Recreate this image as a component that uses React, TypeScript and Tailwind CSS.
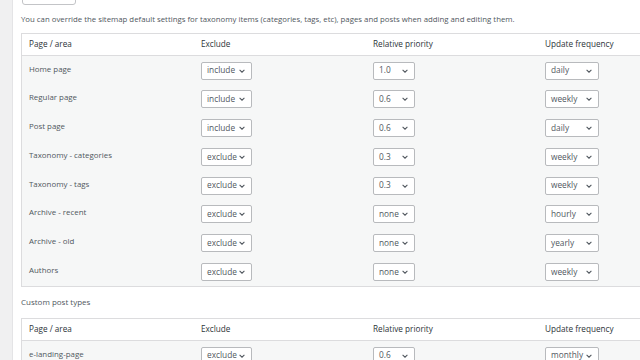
import React from 'react';

type Row = { label: string; exclude: string; priority: string; freq: string };

const mainRows: Row[] = [
  { label: 'Home page', exclude: 'include', priority: '1.0', freq: 'daily' },
  { label: 'Regular page', exclude: 'include', priority: '0.6', freq: 'weekly' },
  { label: 'Post page', exclude: 'include', priority: '0.6', freq: 'daily' },
  { label: 'Taxonomy - categories', exclude: 'exclude', priority: '0.3', freq: 'weekly' },
  { label: 'Taxonomy - tags', exclude: 'exclude', priority: '0.3', freq: 'weekly' },
  { label: 'Archive - recent', exclude: 'exclude', priority: 'none', freq: 'hourly' },
  { label: 'Archive - old', exclude: 'exclude', priority: 'none', freq: 'yearly' },
  { label: 'Authors', exclude: 'exclude', priority: 'none', freq: 'weekly' },
];

const customRows: Row[] = [
  { label: 'e-landing-page', exclude: 'exclude', priority: '0.6', freq: 'monthly' },
];

const Select: React.FC<{ value: string; width: string }> = ({ value, width }) => (
  <div
    className={`flex h-[18px] items-center justify-between rounded-[2px] border border-[#b8babd] bg-white pl-[5px] pr-[5px] text-[8.3px] text-[#50575e] ${width}`}
  >
    <span>{value}</span>
    <svg width="8" height="8" viewBox="0 0 10 10" fill="none" stroke="#50575e" strokeWidth="1.3">
      <path d="M2 3.5 L5 6.5 L8 3.5" />
    </svg>
  </div>
);

const SettingsTable: React.FC<{ rows: Row[] }> = ({ rows }) => (
  <div className="w-[660px] border border-[#dcdcde] bg-[#f6f7f7]">
    <div className="grid h-[22px] grid-cols-[179px_172px_172px_1fr] items-center border-b border-[#dcdcde] bg-white text-[8.2px] text-[#2c3338]">
      <div className="pl-[7px]">Page / area</div>
      <div>Exclude</div>
      <div>Relative priority</div>
      <div>Update frequency</div>
    </div>
    {rows.map((r) => (
      <div key={r.label} className="grid h-[28.75px] grid-cols-[179px_172px_172px_1fr] pt-[5.5px]">
        <div className="pl-[7px] text-[7.9px] leading-[14px] text-[#50575e]">{r.label}</div>
        <div>
          <Select value={r.exclude} width="w-[51px]" />
        </div>
        <div>
          <Select value={r.priority} width="w-[42px]" />
        </div>
        <div>
          <Select value={r.freq} width="w-[54px]" />
        </div>
      </div>
    ))}
  </div>
);

export default function App() {
  return (
    <div
      className="flex h-[360px] w-[640px] overflow-hidden bg-white"
      style={{ fontFamily: '"Open Sans", "Noto Sans", sans-serif' }}
    >
      <div className="w-[13px] shrink-0 border-r border-[#e4e4e6] bg-[#f0f0f1]" />
      <div className="min-w-0 flex-1 pl-[8px]">
        <div className="-mt-[16px] flex items-center">
          <div className="ml-[1px] h-[21px] w-[54px] rounded-[3px] border border-[#c3c4c7] bg-white" />
        </div>
        <p className="mt-[8px] text-[7.8px] leading-[12px] text-[#50575e]">
          You can override the sitemap default settings for taxonomy items (categories, tags, etc), pages and posts when adding and editing them.
        </p>
        <div className="mt-[8px]">
          <SettingsTable rows={mainRows} />
        </div>
        <p className="mt-[9px] text-[8px] leading-[12px] text-[#50575e]">Custom post types</p>
        <div className="mt-[10px]">
          <SettingsTable rows={customRows} />
        </div>
      </div>
    </div>
  );
}
